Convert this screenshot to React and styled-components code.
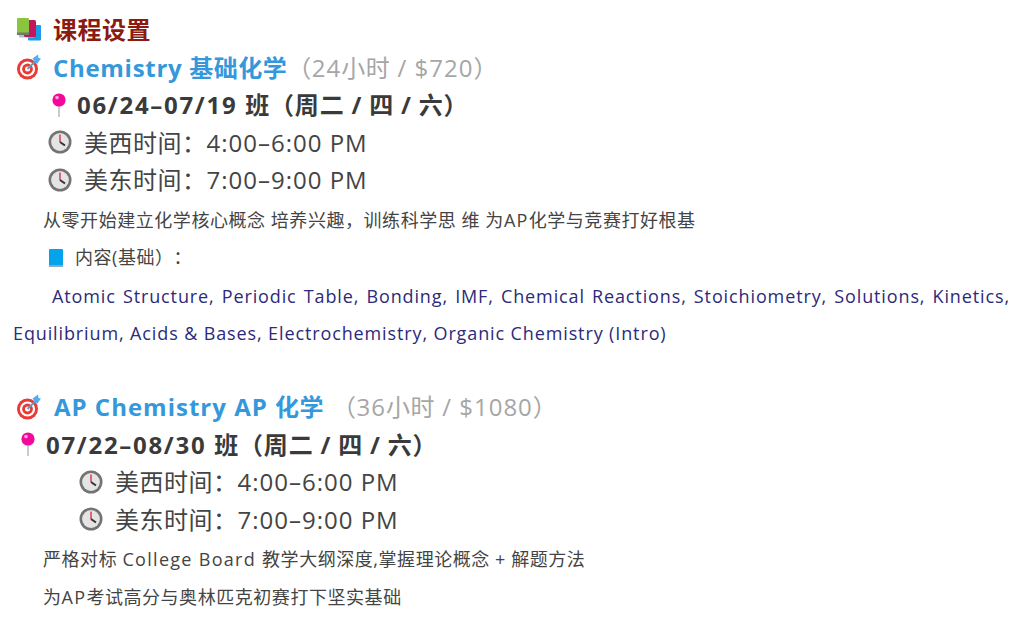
import styled, { createGlobalStyle } from "styled-components";

const GlobalStyle = createGlobalStyle`
  html, body {
    margin: 0;
    padding: 0;
    background: #fff;
  }
  body {
    font-family: "Open Sans", "Noto Sans CJK SC", sans-serif;
    text-spacing-trim: space-all;
  }
`;

const Page = styled.div`
  width: 997px;
  padding: 11px 0 0 13px;
  height: 609px;
  overflow: hidden;
  letter-spacing: 0.5px;
`;

const Line = styled.p`
  margin: 0;
  height: 37.5px;
  line-height: 37.5px;
  padding-left: ${(p) => p.$indent || 0}px;
  white-space: pre;
  display: flex;
  align-items: center;
`;

const Latin = styled.span`
  letter-spacing: ${(p) => p.$ls}px;
`;

const SectionTitle = styled(Line)`
  font-size: 24px;
  font-weight: 700;
  color: #8b1a10;
`;

const CourseTitle = styled(Line)`
  font-size: 24px;
  font-weight: 700;
  color: #3498db;
`;

const CourseMeta = styled.span`
  font-weight: 400;
  color: #a6a6a6;
  margin-left: ${(p) => p.$gap}px;
`;

const ClassDate = styled(Line)`
  font-size: 24px;
  font-weight: 700;
  color: #3a3a3a;
  letter-spacing: 0.8px;
`;

const TimeRow = styled(Line)`
  font-size: 24px;
  color: #444;
`;

const Note = styled(Line)`
  font-size: 18px;
  color: #444;
  box-sizing: border-box;
  padding-top: 6px;
  letter-spacing: 0.55px;
`;

const Topics = styled.p`
  margin: 4px 0 0;
  font-size: 18px;
  line-height: 37.5px;
  color: #2c2a7a;
  text-align: justify;
  text-indent: 39px;
  letter-spacing: 0.88px;
`;

const Spacer = styled.div`
  height: 35.5px;
`;

const IconSlot = styled.span`
  display: inline-flex;
  flex: none;
  width: ${(p) => p.$w}px;
`;

const BooksIcon = () => (
  <svg width="30" height="26" viewBox="0 0 30 26">
    <rect x="15" y="8" width="13" height="15.5" rx="1" fill="#1e9be8" />
    <rect x="6" y="6" width="15" height="14.5" rx="1" fill="#b7bdc4" />
    <rect x="11" y="3" width="12" height="17" rx="1.5" fill="#c2185b" />
    <rect x="4" y="1" width="12" height="16" rx="1" fill="#8bc53f" />
    <rect x="4" y="15.5" width="12" height="2.5" fill="#6f7b6a" />
  </svg>
);

const TargetIcon = () => (
  <svg width="28" height="26" viewBox="0 0 28 26">
    <circle cx="14.5" cy="15" r="10.5" fill="#ea3a35" />
    <circle cx="14.5" cy="15" r="7.6" fill="#fff" />
    <circle cx="14.5" cy="15" r="5.4" fill="#ea3a35" />
    <circle cx="14.5" cy="15" r="2.5" fill="#fff" />
    <path d="M14.5 15L23 6.5" stroke="#5c9fc4" strokeWidth="1.8" />
    <path d="M19.5 4.5L25 0.5L25.5 4L28 4.5L24 10Z" fill="#55acee" />
  </svg>
);

const PinIcon = () => (
  <svg width="14" height="24" viewBox="0 0 14 24">
    <rect x="6" y="10" width="2" height="14" fill="#c9ccce" />
    <circle cx="7" cy="7" r="6.6" fill="#f4079b" />
    <circle cx="5" cy="4.6" r="1.8" fill="#ffa6d8" />
  </svg>
);

const ClockIcon = () => (
  <svg width="24" height="24" viewBox="0 0 24 24">
    <circle cx="12" cy="12" r="11.5" fill="#737373" />
    <circle cx="12" cy="12" r="8.9" fill="#e4e4e4" />
    <path d="M12 4.6V12" stroke="#d9314a" strokeWidth="1.4" />
    <path d="M12 12L17 15.5" stroke="#333" strokeWidth="2" />
  </svg>
);

const BookIcon = () => (
  <svg width="16" height="20" viewBox="0 0 16 20">
    <rect x="1" y="1" width="14" height="17" rx="1" fill="#03a4ec" />
    <rect x="1" y="17" width="14" height="2" fill="#8fa9bd" />
  </svg>
);

const App = () => (
  <>
    <GlobalStyle />
    <Page>
      <SectionTitle>
        <IconSlot $w={40}><BooksIcon /></IconSlot>
        课程设置
      </SectionTitle>
      <CourseTitle>
        <IconSlot $w={40}><TargetIcon /></IconSlot>
        <Latin $ls={0.7}>Chemistry </Latin>基础化学
        <CourseMeta $gap={0}>（<Latin $ls={1}>24</Latin>小时<Latin $ls={1}> / $720</Latin>）</CourseMeta>
      </CourseTitle>
      <ClassDate $indent={39}>
        <IconSlot $w={25}><PinIcon /></IconSlot>
        <Latin $ls={1.7}>06/24–07/19 </Latin>班（周二 / 四 / 六）
      </ClassDate>
      <TimeRow $indent={35}>
        <IconSlot $w={36}><ClockIcon /></IconSlot>
        美西时间：<Latin $ls={1}>4:00–6:00 PM</Latin>
      </TimeRow>
      <TimeRow $indent={35}>
        <IconSlot $w={36}><ClockIcon /></IconSlot>
        美东时间：<Latin $ls={1}>7:00–9:00 PM</Latin>
      </TimeRow>
      <Note $indent={30}>从零开始建立化学核心概念 培养兴趣，训练科学思 维 为<Latin $ls={1.3}>AP</Latin>化学与竞赛打好根基</Note>
      <Note $indent={35}>
        <IconSlot $w={27}><BookIcon /></IconSlot>
        内容(基础）：
      </Note>
      <Topics>
        Atomic Structure, Periodic Table, Bonding, IMF, Chemical Reactions, Stoichiometry, Solutions, Kinetics, Equilibrium, Acids &amp; Bases, Electrochemistry, Organic Chemistry (Intro)
      </Topics>
      <Spacer />
      <CourseTitle>
        <IconSlot $w={41}><TargetIcon /></IconSlot>
        <Latin $ls={1}>AP Chemistry AP </Latin>化学
        <CourseMeta $gap={8}>（<Latin $ls={1}>36</Latin>小时<Latin $ls={1}> / $1080</Latin>）</CourseMeta>
      </CourseTitle>
      <ClassDate $indent={8}>
        <IconSlot $w={25}><PinIcon /></IconSlot>
        <Latin $ls={1.7}>07/22–08/30 </Latin>班（周二 / 四 / 六）
      </ClassDate>
      <TimeRow $indent={66}>
        <IconSlot $w={36}><ClockIcon /></IconSlot>
        美西时间：<Latin $ls={1}>4:00–6:00 PM</Latin>
      </TimeRow>
      <TimeRow $indent={66}>
        <IconSlot $w={36}><ClockIcon /></IconSlot>
        美东时间：<Latin $ls={1}>7:00–9:00 PM</Latin>
      </TimeRow>
      <Note $indent={30}>严格对标 <Latin $ls={1.3}>College Board </Latin>教学大纲深度,掌握理论概念 + 解题方法</Note>
      <Note $indent={30}>为<Latin $ls={1.3}>AP</Latin>考试高分与奥林匹克初赛打下坚实基础</Note>
    </Page>
  </>
);

export default App;
